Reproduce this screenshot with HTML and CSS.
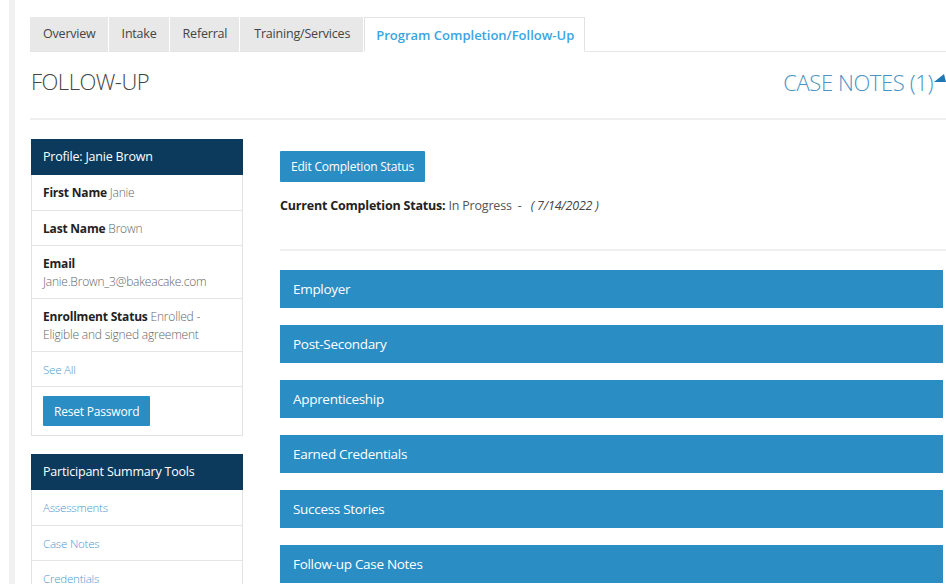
FILE: index.html
```html
<!DOCTYPE html>
<html lang="en">
<head>
<meta charset="utf-8">
<title>Follow-Up</title>
<link rel="stylesheet" href="styles.css">
</head>
<body>
<div class="page">
  <div class="rail"></div>
  <div class="main">
    <ul class="tabs">
      <li class="tab">Overview</li>
      <li class="tab">Intake</li>
      <li class="tab">Referral</li>
      <li class="tab tab-last">Training/Services</li>
      <li class="tab tab-active">Program Completion/Follow-Up</li>
      <li class="tab-fill"></li>
    </ul>

    <div class="title-row">
      <h1 class="page-title">FOLLOW-UP</h1>
      <div class="case-notes">CASE NOTES (1)<svg class="caret" width="12" height="10" viewBox="0 0 12 10"><polygon points="0,8 10,0 12,8" fill="#1f78b4"/></svg></div>
    </div>

    <div class="layout">
      <aside class="sidebar">
        <section class="panel">
          <div class="panel-head">Profile: Janie Brown</div>
          <div class="row"><b>First Name</b> <span class="val">Janie</span></div>
          <div class="row"><b>Last Name</b> <span class="val">Brown</span></div>
          <div class="row"><b>Email</b><br><span class="val">Janie.Brown_3@bakeacake.com</span></div>
          <div class="row"><b>Enrollment Status</b> <span class="val">Enrolled - Eligible and signed agreement</span></div>
          <div class="row"><a class="link">See All</a></div>
          <div class="row row-btn"><button class="btn">Reset Password</button></div>
        </section>

        <section class="panel">
          <div class="panel-head">Participant Summary Tools</div>
          <div class="row"><a class="link">Assessments</a></div>
          <div class="row"><a class="link">Case Notes</a></div>
          <div class="row"><a class="link">Credentials</a></div>
        </section>
      </aside>

      <div class="content">
        <button class="btn btn-edit">Edit Completion Status</button>
        <p class="status"><b>Current Completion Status:</b> In Progress &nbsp;- &nbsp; <i>( 7/14/2022 )</i></p>
        <hr class="divider">
        <div class="bars">
          <div class="bar">Employer</div>
          <div class="bar">Post-Secondary</div>
          <div class="bar">Apprenticeship</div>
          <div class="bar">Earned Credentials</div>
          <div class="bar">Success Stories</div>
          <div class="bar">Follow-up Case Notes</div>
        </div>
      </div>
    </div>
  </div>
</div>
</body>
</html>
```

FILE: styles.css
```css
* { box-sizing: border-box; }

html, body {
  margin: 0;
  padding: 0;
  background: #fff;
  font-family: "Open Sans", "Noto Sans", sans-serif;
  color: #333;
  overflow: hidden;
}

.page {
  display: flex;
  width: 946px;
  height: 584px;
  padding-left: 9px;
}

.rail {
  width: 6px;
  flex: none;
  background: #f1f1f1;
}

.main {
  flex: 1;
  padding-left: 15px;
  min-width: 0;
}

/* tab strip */
.tabs {
  list-style: none;
  margin: 17px 0 0;
  padding: 0;
  display: flex;
  height: 35px;
}

.tab {
  background: #e8e8e8;
  color: #444;
  font-size: 12.5px;
  line-height: 34px;
  padding: 0 12px 0 13px;
  margin-right: 1px;
  border-bottom: 1px solid #e4e4e4;
  letter-spacing: -0.2px;
}

.tab-last {
  padding: 0 13px 0 14px;
}

.tab-active {
  background: #fff;
  color: #3aa5e2;
  font-weight: 600;
  font-size: 13px;
  letter-spacing: 0;
  border: 1px solid #e2e2e2;
  border-bottom-color: #fff;
  padding: 0 10px 0 11px;
  margin-right: 0;
}

.tab-fill {
  flex: 1;
  border-bottom: 1px solid #e6e6e6;
}

/* heading row */
.title-row {
  display: flex;
  justify-content: space-between;
  align-items: flex-start;
  height: 68px;
  border-bottom: 2px solid #efefef;
}

.page-title {
  margin: 14px 0 0 1px;
  font-size: 22px;
  font-weight: 300;
  color: #444;
  letter-spacing: -0.5px;
}

.case-notes {
  margin-top: 15px;
  font-size: 22px;
  font-weight: 300;
  color: #4b93c2;
  letter-spacing: -0.4px;
  display: flex;
  align-items: center;
}

.caret {
  margin-left: 1px;
  margin-top: -6px;
}

/* two-column body */
.layout {
  display: flex;
  gap: 37px;
}

.sidebar {
  width: 212px;
  flex: none;
  margin-left: 1px;
  padding-top: 19px;
  display: flex;
  flex-direction: column;
  gap: 18px;
}

.panel {
  border: 1px solid #e2e2e2;
  border-top: 0;
}

.panel-head {
  background: #0c3a5d;
  color: #fff;
  font-size: 12.5px;
  height: 36px;
  line-height: 36px;
  padding: 0 12px;
  margin: 0 -1px;
  letter-spacing: -0.2px;
}

.row {
  font-size: 12px;
  line-height: 18px;
  padding: 9px 11px 7px;
  min-height: 35px;
  border-top: 1px solid #e4e4e4;
  color: #222;
  letter-spacing: -0.2px;
}

.panel-head + .row { border-top: 0; padding-top: 9px; padding-bottom: 8px; }

.row b { font-weight: 700; }

.val {
  color: #666;
  font-weight: 300;
}

.link {
  color: #4f98cf;
  font-weight: 300;
  font-size: 11.5px;
}

.row-btn { padding: 9px 11px; }

.btn {
  display: block;
  background: #2a8dc4;
  color: #fff;
  border: 0;
  border-radius: 1px;
  font-family: inherit;
  font-size: 12px;
  height: 30px;
  padding: 0 11px;
  letter-spacing: -0.2px;
}

/* main content */
.content {
  flex: 1;
  min-width: 0;
  padding-top: 31px;
  padding-right: 3px;
}

.btn-edit {
  height: 31px;
  padding: 0 11px;
}

.status {
  margin: 15px 0 0;
  font-size: 12.5px;
  color: #555;
  letter-spacing: -0.2px;
}

.status b {
  color: #222;
  font-weight: 700;
}

.status i { color: #444; }

.divider {
  margin: 35px -3px 0 0;
  border: 0;
  border-top: 2px solid #efefef;
}

.bars {
  margin-top: 19px;
  display: flex;
  flex-direction: column;
  gap: 17px;
}

.bar {
  background: #2a8dc4;
  color: #fff;
  height: 38px;
  line-height: 38px;
  padding: 0 13px;
  font-size: 13.5px;
  letter-spacing: -0.3px;
}
```
